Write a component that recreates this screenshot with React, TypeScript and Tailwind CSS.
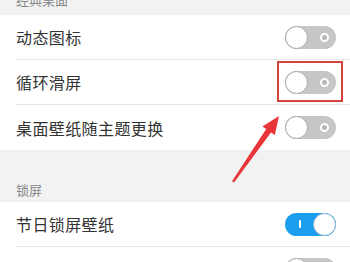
const font = { fontFamily: '"Noto Sans CJK SC", "Noto Sans", sans-serif' };

function Toggle({ on = false }: { on?: boolean }) {
  if (on) {
    return (
      <div className="relative flex items-center justify-between w-[51px] h-[23px] rounded-full bg-[#1c9eee] pl-[14px]">
        <div className="w-[2px] h-[8px] bg-white rounded-sm" />
        <div className="w-[23px] h-[23px] rounded-full bg-white border border-[#8fb9d6]" />
      </div>
    );
  }
  return (
    <div className="flex items-center justify-between w-[51px] h-[23px] rounded-full bg-[#c6c6c6] pr-[7px]">
      <div className="w-[23px] h-[23px] rounded-full bg-white border border-[#a9a9a9]" />
      <div className="w-[9px] h-[9px] rounded-full border-2 border-white bg-[#b5b5b5]" />
    </div>
  );
}

function Row({ label, on, last }: { label: string; on?: boolean; last?: boolean }) {
  return (
    <div className="bg-white pl-4">
      <div
        className={`flex items-center justify-between h-[45px] pr-[14px] ${
          last ? '' : 'border-b border-[#e6e6e6]'
        }`}
      >
        <span className="text-[16px] tracking-[0.4px] text-[#333]">{label}</span>
        <Toggle on={on} />
      </div>
    </div>
  );
}

export default function App() {
  return (
    <div className="relative w-[350px] h-[262px] overflow-hidden bg-[#f2f2f2]" style={font}>
      <div className="h-[15px] flex items-end pl-4 pb-[9px] overflow-hidden">
        <span className="text-[13px] leading-[13px] text-[#888]">经典桌面</span>
      </div>
      <Row label="动态图标" />
      <Row label="循环滑屏" />
      <Row label="桌面壁纸随主题更换" last />
      <div className="h-[52px] flex items-end pl-4 pb-[6px]">
        <span className="text-[13px] leading-[13px] text-[#888]">锁屏</span>
      </div>
      <Row label="节日锁屏壁纸" on />
      <Row label="锁屏显示通知" />

      <div className="absolute left-[277px] top-[61px] w-[66px] h-[41px] border-[2.5px] border-[#d8433d]" />
      <svg className="absolute left-0 top-0" width="350" height="262" viewBox="0 0 350 262">
        <polygon
          points="279,116 274.8,135 271,132.4 234,182.6 232,181.2 266.2,129 262.4,126.4"
          fill="#e8353a"
        />
      </svg>
    </div>
  );
}
